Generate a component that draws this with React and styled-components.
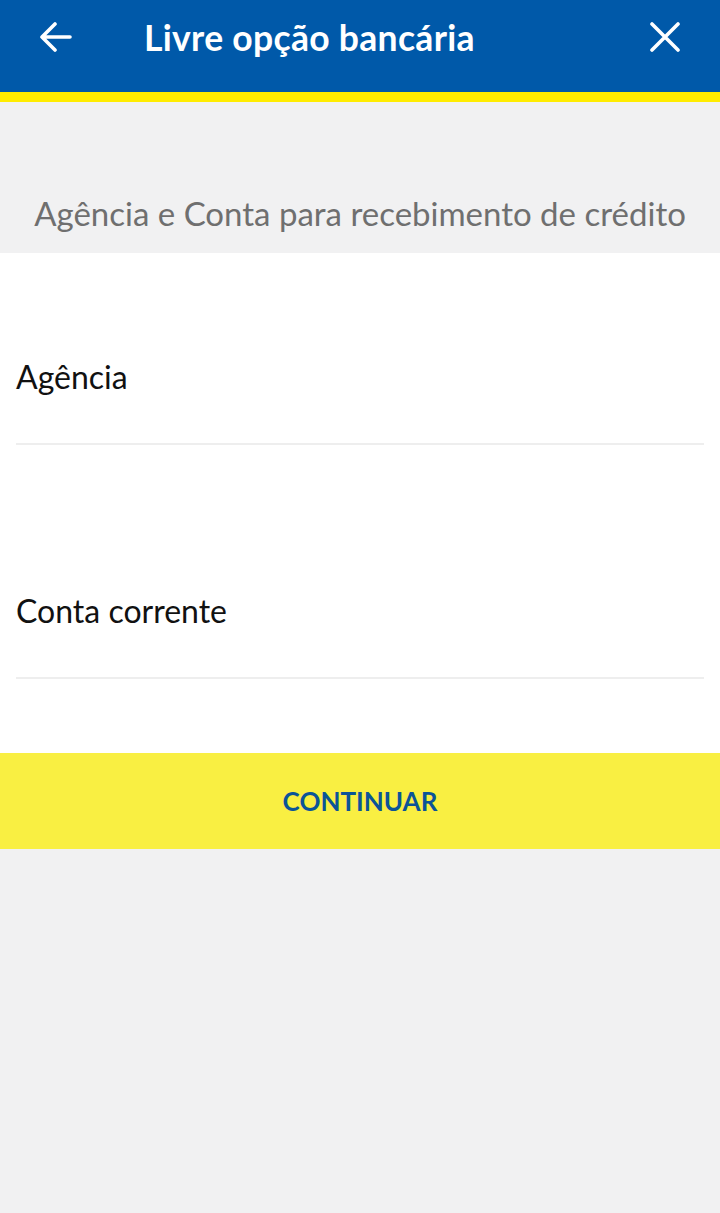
import React from "react";
import styled, { createGlobalStyle } from "styled-components";

const GlobalStyle = createGlobalStyle`
  html, body {
    margin: 0;
    padding: 0;
    background: #f1f1f2;
    font-family: "Lato", "Open Sans", sans-serif;
  }
`;

const Page = styled.div`
  width: 720px;
  min-height: 1213px;
  background: #f1f1f2;
  display: flex;
  flex-direction: column;
`;

const Header = styled.header`
  height: 92px;
  background: #0059a9;
  border-bottom: 10px solid #ffec00;
`;

const HeaderRow = styled.div`
  height: 74px;
  display: flex;
  align-items: center;
  padding: 0 40px;
`;

const IconButton = styled.button`
  width: ${(p) => p.size}px;
  height: ${(p) => p.size}px;
  padding: 0;
  border: 0;
  background: none;
  display: flex;
  align-items: center;
  justify-content: center;
  cursor: pointer;
`;

const Title = styled.h1`
  flex: 1;
  margin: 0 0 0 72px;
  color: #ffffff;
  font-size: 35.5px;
  font-weight: 700;
  letter-spacing: 0.3px;
`;

const Intro = styled.div`
  height: 151px;
  display: flex;
  align-items: flex-end;
  justify-content: center;
  padding-bottom: 20px;
  box-sizing: border-box;
`;

const Subtitle = styled.p`
  margin: 0;
  color: #6f6f6f;
  font-size: 33px;
  font-weight: 400;
`;

const Form = styled.div`
  background: #ffffff;
  padding: 104px 16px 74px;
  display: flex;
  flex-direction: column;
  gap: 146px;
`;

const Field = styled.label`
  display: block;
  border-bottom: 2px solid #eeeeee;
  padding-bottom: 46px;
`;

const Label = styled.span`
  display: block;
  height: 40px;
  line-height: 40px;
  color: #111111;
  font-size: 32px;
`;

const ContinueButton = styled.button`
  width: 100%;
  height: 96px;
  border: 0;
  background: #f9ef42;
  color: #0b5497;
  font-family: inherit;
  font-size: 26px;
  font-weight: 700;
  cursor: pointer;
`;

const fields = ["Agência", "Conta corrente"];

export default function App() {
  return (
    <Page>
      <GlobalStyle />
      <Header>
        <HeaderRow>
          <IconButton size={32} aria-label="Voltar">
            <svg width="32" height="32" viewBox="0 0 32 32" fill="none" stroke="#fff" strokeWidth="3.6" strokeLinecap="round" strokeLinejoin="round">
              <path d="M30 16H3M15 3L2 16l13 13" />
            </svg>
          </IconButton>
          <Title>Livre opção bancária</Title>
          <IconButton size={30} aria-label="Fechar">
            <svg width="30" height="30" viewBox="0 0 30 30" fill="none" stroke="#fff" strokeWidth="3.6" strokeLinecap="round">
              <path d="M2 2l26 26M28 2L2 28" />
            </svg>
          </IconButton>
        </HeaderRow>
      </Header>
      <Intro>
        <Subtitle>Agência e Conta para recebimento de crédito</Subtitle>
      </Intro>
      <Form>
        {fields.map((f) => (
          <Field key={f}>
            <Label>{f}</Label>
          </Field>
        ))}
      </Form>
      <ContinueButton>CONTINUAR</ContinueButton>
    </Page>
  );
}
